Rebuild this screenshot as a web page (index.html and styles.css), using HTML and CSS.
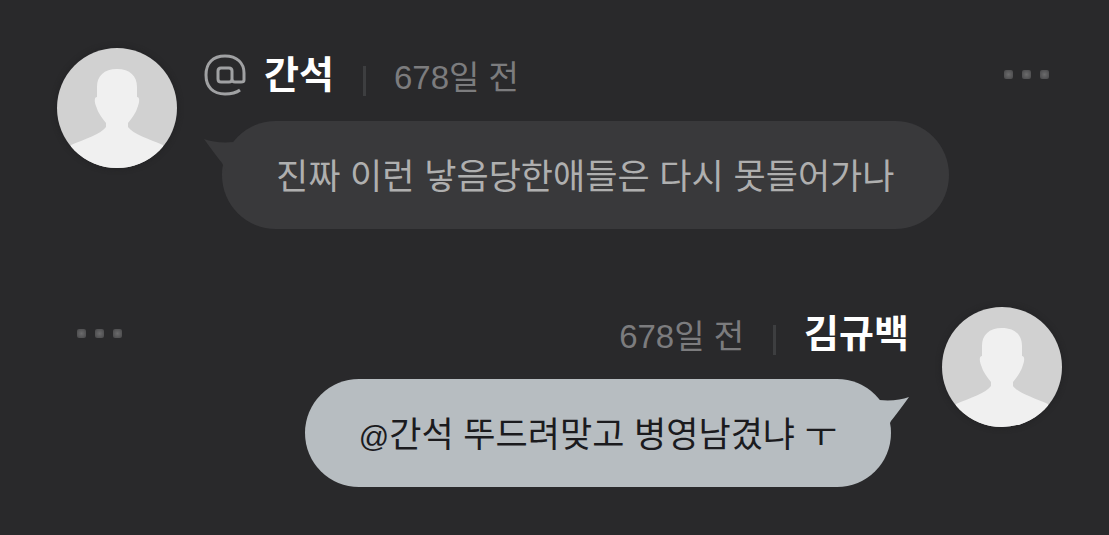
FILE: index.html
```html
<!DOCTYPE html>
<html lang="ko">
<head>
<meta charset="utf-8">
<meta name="viewport" content="width=device-width, initial-scale=1">
<title>댓글</title>
<link rel="stylesheet" href="styles.css">
</head>
<body>
<svg class="defs" aria-hidden="true">
  <symbol id="person" viewBox="0 0 120 120">
    <rect width="120" height="120" fill="#d1d1d1"/>
    <path fill="#f0f0f0" d="M60 21C47 21 40 28 40 39V49C37 49 37.500 54 39 58C41 65 45 70 49 75V79C44 86 28 91 14 97V120H106V97C92 91 76 86 71 79V75C75 70 79 65 81 58C82.500 54 83 49 80 49V39C80 28 73 21 60 21Z"/>
  </symbol>
  <symbol id="tail" viewBox="0 0 30 32">
    <path d="M0 0C8 3 18 4 30 3V32H22L18 24Q10 14 0 0Z"/>
  </symbol>
</svg>
<main class="comments">
  <article class="comment">
    <svg class="avatar" role="img" aria-label="프로필 사진"><use href="#person"/></svg>
    <div class="body">
      <header class="meta">
        <svg class="reply" viewBox="0 0 42 42" role="img" aria-label="답글">
          <path d="M36 36C32 39 27 40 21 40C9 40 2 33 2 21C2 9 9 2 21 2C33 2 40 9 40 19V26Q40 28 37 28H31Q28 28 28 25V17Q28 14 25 14H17Q14 14 14 17V25Q14 28 17 28H25Q28 28 28 25"/>
        </svg>
        <strong class="name">간석</strong>
        <span class="divider"></span>
        <time class="time">678일 전</time>
        <button class="more" type="button" aria-label="더보기"><i class="dot"></i><i class="dot"></i><i class="dot"></i></button>
      </header>
      <p class="bubble"><svg class="tail" aria-hidden="true"><use href="#tail"/></svg>진짜 이런 낳음당한애들은 다시 못들어가나</p>
    </div>
  </article>
  <article class="comment mine">
    <svg class="avatar" role="img" aria-label="프로필 사진"><use href="#person"/></svg>
    <div class="body">
      <header class="meta">
        <strong class="name">김규백</strong>
        <span class="divider"></span>
        <time class="time">678일 전</time>
        <button class="more" type="button" aria-label="더보기"><i class="dot"></i><i class="dot"></i><i class="dot"></i></button>
      </header>
      <p class="bubble"><svg class="tail" aria-hidden="true"><use href="#tail"/></svg><span class="at">@</span>간석 뚜드려맞고 병영남겼냐 ㅜ</p>
    </div>
  </article>
</main>
</body>
</html>
```
FILE: styles.css
```css
* { box-sizing: border-box; }
body {
  margin: 0;
  background: #29292b;
  color: #afafaf;
  font-family: "Liberation Sans", "Noto Sans CJK KR", sans-serif;
}
.defs { position: absolute; width: 0; height: 0; }
.comments {
  display: flex;
  flex-direction: column;
  gap: 78px;
  padding: 48px 47px 48px 57px;
}
.comment {
  display: flex;
  align-items: flex-start;
  gap: 27px;
}
.mine { flex-direction: row-reverse; gap: 33px; }
.avatar {
  flex: none;
  width: 120px;
  height: 120px;
  border-radius: 50%;
  box-shadow: 0 0 4px 2px #252527;
}
.body {
  flex: 1;
  display: flex;
  flex-direction: column;
  align-items: flex-start;
  gap: 19px;
}
.mine .body { align-items: flex-end; gap: 18px; }
.meta {
  display: flex;
  align-items: center;
  align-self: stretch;
  height: 54px;
}
.mine .meta { flex-direction: row-reverse; }
.reply {
  width: 42px;
  height: 42px;
  margin-right: 18px;
  fill: none;
  stroke: #a0a1a3;
  stroke-width: 3;
}
.name { color: #fff; font-size: 38px; line-height: 54px; }
.divider {
  width: 3px;
  height: 30px;
  margin: 12px 28px 0 29px;
  background: #3d3e40;
}
.time {
  padding-top: 5px;
  color: #7c7c7e;
  font-size: 33px;
  line-height: 54px;
}
.more {
  display: flex;
  gap: 9px;
  margin: 0 13px 2px auto;
  padding: 0;
  border: 0;
  background: none;
}
.mine .more { margin: 0 auto 2px 20px; }
.dot {
  width: 9px;
  height: 9px;
  border-radius: 2px;
  background: radial-gradient(#6b6b6c, #464648);
}
.bubble {
  position: relative;
  margin: 0 18px;
  padding: 30px 54px 26px;
  border-radius: 54px;
  background: #39393b;
  font-size: 35px;
  line-height: 52px;
}
.mine .bubble { background: #b7bdc1; color: #1b1b1e; }
.at { font-size: 30px; line-height: 1; }
.tail {
  position: absolute;
  top: 18px;
  left: -18px;
  width: 30px;
  height: 32px;
  fill: #39393b;
}
.mine .tail {
  right: -18px;
  left: auto;
  fill: #b7bdc1;
  transform: scaleX(-1);
}
```
